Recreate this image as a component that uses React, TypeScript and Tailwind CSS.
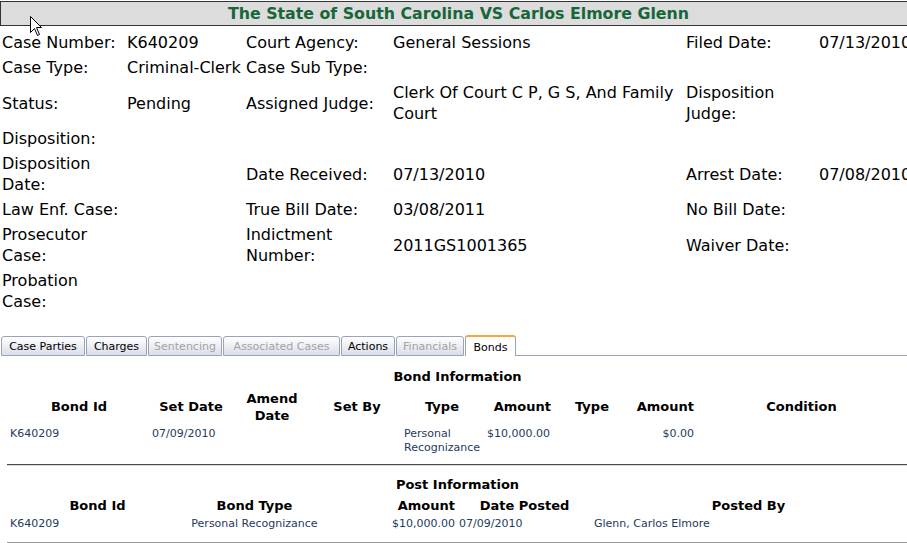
import React from "react";

const F = { fontFamily: '"DejaVu Sans", Verdana, sans-serif' };

function Cell({ children, className = "" }: { children?: React.ReactNode; className?: string }) {
  return <div className={"px-[2px] py-[2px] whitespace-nowrap " + className}>{children}</div>;
}

const tabs = [
  { label: "Case Parties", w: "w-[84px]", dis: false },
  { label: "Charges", w: "w-[61px]", dis: false },
  { label: "Sentencing", w: "w-[74px]", dis: true },
  { label: "Associated Cases", w: "w-[117px]", dis: true },
  { label: "Actions", w: "w-[54px]", dis: false },
  { label: "Financials", w: "w-[68px]", dis: true },
];

export default function App() {
  return (
    <div className="relative w-[907px] h-[543px] overflow-hidden bg-white text-black" style={F}>
      {/* Title bar */}
      <div className="mt-[1px] h-[25px] w-[920px] bg-[#dcdcdc] border-t border-b border-l border-[#333] flex items-center justify-center pr-[4px]">
        <span className="text-[15.8px] font-bold text-[#17663a] leading-none">
          The State of South Carolina VS Carlos Elmore Glenn
        </span>
      </div>

      {/* Case info */}
      <div className="mt-[4px] grid grid-cols-[125px_119px_147px_293px_133px_140px] items-center text-[16px] leading-[21px] w-[957px]">
        <Cell>Case Number:</Cell>
        <Cell>K640209</Cell>
        <Cell>Court Agency:</Cell>
        <Cell>General Sessions</Cell>
        <Cell>Filed Date:</Cell>
        <Cell>07/13/2010</Cell>

        <Cell>Case Type:</Cell>
        <Cell>Criminal-Clerk</Cell>
        <Cell>Case Sub Type:</Cell>
        <Cell></Cell>
        <Cell></Cell>
        <Cell></Cell>

        <Cell>Status:</Cell>
        <Cell>Pending</Cell>
        <Cell>Assigned Judge:</Cell>
        <Cell>
          Clerk Of Court C P, G S, And Family
          <br />
          Court
        </Cell>
        <Cell>
          Disposition
          <br />
          Judge:
        </Cell>
        <Cell></Cell>

        <Cell>Disposition:</Cell>
        <Cell></Cell>
        <Cell></Cell>
        <Cell></Cell>
        <Cell></Cell>
        <Cell></Cell>

        <Cell>
          Disposition
          <br />
          Date:
        </Cell>
        <Cell></Cell>
        <Cell>Date Received:</Cell>
        <Cell>07/13/2010</Cell>
        <Cell>Arrest Date:</Cell>
        <Cell>07/08/2010</Cell>

        <Cell>Law Enf. Case:</Cell>
        <Cell></Cell>
        <Cell>True Bill Date:</Cell>
        <Cell>03/08/2011</Cell>
        <Cell>No Bill Date:</Cell>
        <Cell></Cell>

        <Cell>
          Prosecutor
          <br />
          Case:
        </Cell>
        <Cell></Cell>
        <Cell>
          Indictment
          <br />
          Number:
        </Cell>
        <Cell>2011GS1001365</Cell>
        <Cell>Waiver Date:</Cell>
        <Cell></Cell>

        <Cell>
          Probation
          <br />
          Case:
        </Cell>
        <Cell></Cell>
        <Cell></Cell>
        <Cell></Cell>
        <Cell></Cell>
        <Cell></Cell>
      </div>

      {/* Tabs */}
      <div className="mt-[22px] flex items-end h-[20px] pl-[1px]">
        {tabs.map((t) => (
          <div
            key={t.label}
            className={
              t.w +
              " h-[20px] mr-[1px] flex items-center justify-center pt-[3px] text-[11px] border border-[#9ba3b5] rounded-t-[3px] bg-gradient-to-b from-[#ffffff] to-[#dadeea] " +
              (t.dis ? "text-[#a3a3a3]" : "text-black")
            }
          >
            {t.label}
          </div>
        ))}
        <div className="w-[51px] h-[21px] flex items-center justify-center text-[11px] border-x border-[#9ba3b5] border-t-2 border-t-[#f2a93b] rounded-t-[3px] bg-white pt-[4px]">
          Bonds
        </div>
        <div className="flex-1 h-[20px] border-b border-[#9ba3b5]"></div>
      </div>

      {/* Bond Information */}
      <div className="ml-[8px] w-[899px]">
        <div className="mt-[12px] text-center text-[13px] font-bold leading-[17px]">Bond Information</div>
        <div className="mt-[4px] grid grid-cols-[142px_82px_80px_90px_80px_70px_80px_64px_211px] text-[13px] font-bold leading-[17px] items-center h-[35px]">
          <div className="text-center">Bond Id</div>
          <div className="text-center">Set Date</div>
          <div className="text-center">
            Amend
            <br />
            Date
          </div>
          <div className="text-center">Set By</div>
          <div className="text-center">Type</div>
          <div className="text-right pr-[1px]">Amount</div>
          <div className="text-center">Type</div>
          <div className="text-right pr-[2px]">Amount</div>
          <div className="text-center">Condition</div>
        </div>
        <div className="mt-[3px] grid grid-cols-[142px_82px_80px_90px_80px_70px_80px_64px_211px] text-[11px] leading-[14px] text-[#1e3a5c] items-start">
          <div className="pl-[2px]">K640209</div>
          <div className="pl-[2px]">07/09/2010</div>
          <div></div>
          <div></div>
          <div className="pl-[2px]">
            Personal
            <br />
            Recognizance
          </div>
          <div className="text-right pr-[2px]">$10,000.00</div>
          <div></div>
          <div className="text-right pr-[2px]">$0.00</div>
          <div></div>
        </div>
      </div>

      <div className="ml-[7px] mt-[9px] border-t border-[#4a4a4a] border-b border-b-[#d8d8d8]"></div>

      {/* Post Information */}
      <div className="ml-[8px] w-[899px]">
        <div className="mt-[10px] text-center text-[13px] font-bold leading-[17px]">Post Information</div>
        <div className="mt-[4px] grid grid-cols-[179px_135px_135px_135px_313px] text-[13px] font-bold leading-[17px] items-center">
          <div className="text-center">Bond Id</div>
          <div className="text-center">Bond Type</div>
          <div className="text-right pr-[2px]">Amount</div>
          <div className="text-center">Date Posted</div>
          <div className="text-center">Posted By</div>
        </div>
        <div className="mt-[3px] grid grid-cols-[179px_135px_135px_135px_313px] text-[11px] leading-[14px] text-[#1e3a5c]">
          <div className="pl-[2px]">K640209</div>
          <div className="text-center whitespace-nowrap">Personal Recognizance</div>
          <div className="text-right pr-[2px]">$10,000.00</div>
          <div className="pl-[2px]">07/09/2010</div>
          <div className="pl-[2px]">Glenn, Carlos Elmore</div>
        </div>
      </div>

      <div className="ml-[7px] mt-[11px] border-t border-[#9a9a9a]"></div>

      {/* Mouse cursor overlay */}
      <svg className="absolute left-[30px] top-[16px]" width="13" height="21" viewBox="0 0 13 21">
        <path d="M0.5 0.5 L0.5 16.5 L4.5 12.5 L7.5 19.5 L9.5 18.5 L6.5 11.5 L11.5 11.5 Z" fill="white" stroke="black" strokeWidth="1" />
      </svg>
    </div>
  );
}
